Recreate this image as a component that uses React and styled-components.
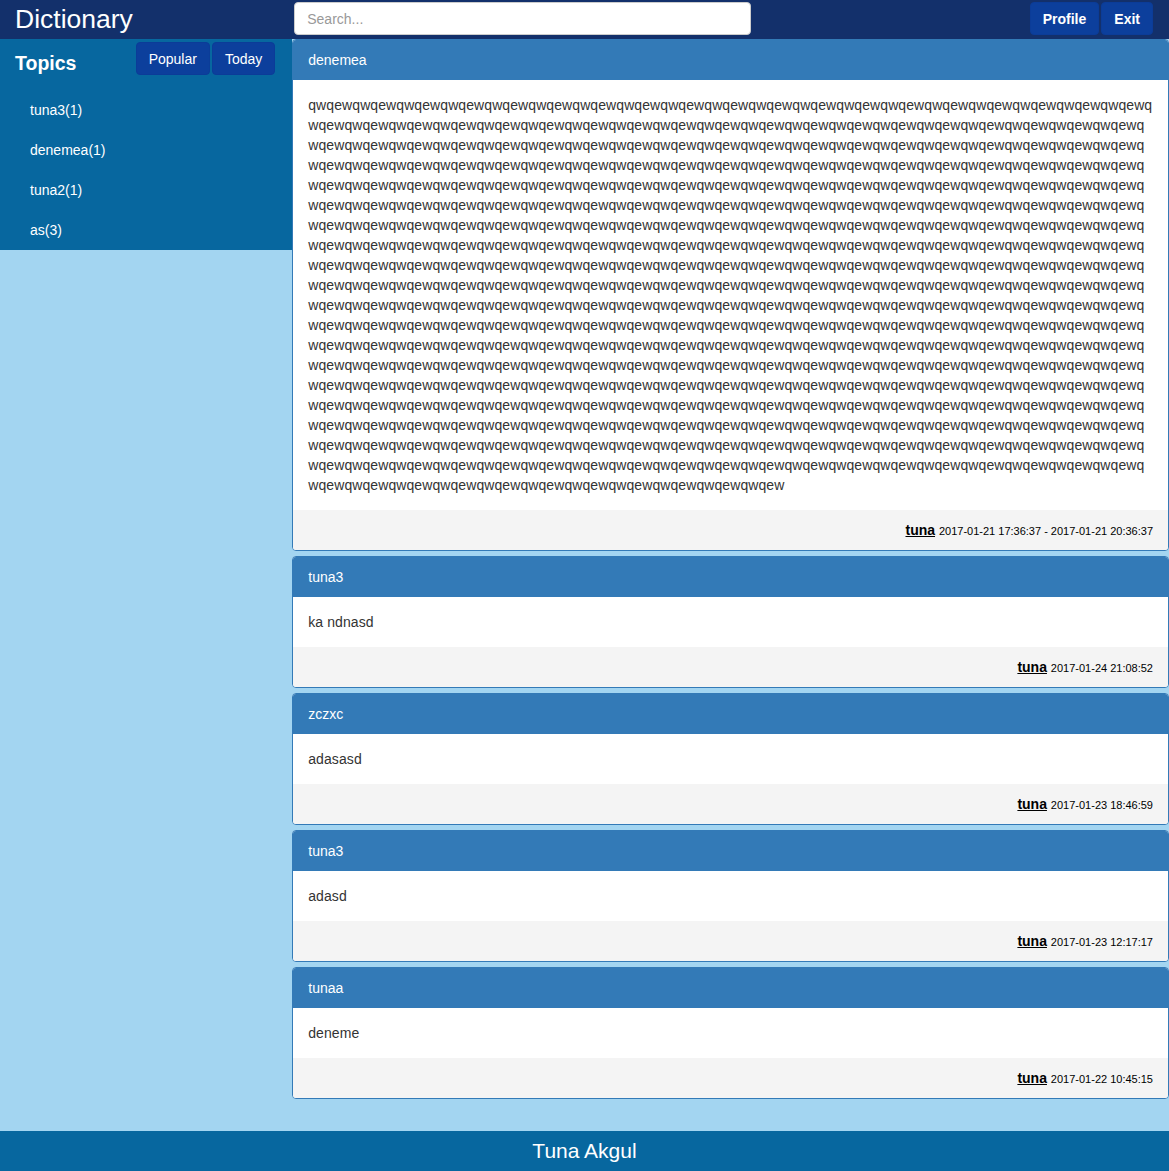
import React from "react";
import styled, { createGlobalStyle } from "styled-components";

const Global = createGlobalStyle`
  html, body { margin: 0; padding: 0; }
  body {
    background: #a3d5f1;
    font-family: "Liberation Sans", Arial, Helvetica, sans-serif;
    font-size: 14px;
    line-height: 20px;
    color: #333;
  }
  * { box-sizing: border-box; }
`;

const Page = styled.div`
  min-height: 100vh;
  display: flex;
  flex-direction: column;
`;

const Navbar = styled.header`
  height: 39px;
  background: #13306b;
  display: flex;
  align-items: flex-start;
`;

const Brand = styled.div`
  width: 25%;
  flex: none;
  padding-left: 15px;
  color: #fff;
  font-size: 26.5px;
  line-height: 39px;
`;

const Search = styled.input`
  margin: 2px 0 0 2px;
  width: 457px;
  height: 33px;
  border: 1px solid #ccc;
  border-radius: 4px;
  padding: 6px 12px;
  font-family: inherit;
  font-size: 14px;
  color: #555;
  outline: none;
  &::placeholder { color: #999; }
`;

const NavActions = styled.div`
  margin-left: auto;
  margin-top: 2px;
  padding-right: 16px;
  display: flex;
  gap: 2px;
`;

const Button = styled.button`
  height: 33px;
  padding: 6px 12px;
  border: 1px solid #0b3c98;
  border-radius: 4px;
  background: #0c3f9c;
  color: #fff;
  font-family: inherit;
  font-size: 14px;
  line-height: 20px;
  font-weight: ${(p) => (p.$bold ? 700 : 400)};
  cursor: pointer;
`;

const Content = styled.div`
  flex: 1;
  display: flex;
  align-items: flex-start;
`;

const Sidebar = styled.aside`
  width: 25%;
  flex: none;
  background: #07679f;
  color: #fff;
`;

const SideHeader = styled.div`
  display: flex;
  align-items: flex-start;
  justify-content: space-between;
  height: 51px;
  padding: 3px 17px 0 15px;
`;

const SideTitle = styled.h2`
  margin: 9px 0 0;
  font-size: 19.5px;
  line-height: 24px;
  font-weight: 700;
`;

const SideButtons = styled.div`
  display: flex;
  gap: 2px;
`;

const TopicList = styled.ul`
  list-style: none;
  margin: 0;
  padding: 0;
`;

const Topic = styled.li`
  padding: 10px 30px;
  line-height: 20px;
  color: #fff;
`;

const Main = styled.main`
  width: 75%;
  flex: none;
  padding-bottom: 27px;
`;

const Panel = styled.section`
  border: 1px solid #337ab7;
  border-radius: 4px;
  background: #fff;
  margin-bottom: 5px;
  overflow: hidden;
`;

const PanelHeading = styled.div`
  background: #337ab7;
  color: #fff;
  padding: 10px 15px;
  line-height: 20px;
`;

const PanelBody = styled.div`
  padding: 15px;
  line-height: 20px;
  color: #333;
  word-break: break-all;
  letter-spacing: 0.085px;
`;

const PanelFooter = styled.div`
  background: #f4f4f4;
  height: 40px;
  padding: 10px 15px;
  text-align: right;
  line-height: 20px;
  color: #000;
`;

const Author = styled.a`
  color: #000;
  font-weight: 700;
  text-decoration: underline;
  font-size: 14px;
  line-height: 20px;
`;

const DateText = styled.span`
  font-size: 11px;
  line-height: 1;
`;

const Footer = styled.footer`
  height: 40px;
  background: #07679f;
  color: #fff;
  text-align: center;
  font-size: 21px;
  line-height: 40px;
`;

const longText = "qwqew".repeat(372);

const topics = ["tuna3(1)", "denemea(1)", "tuna2(1)", "as(3)"];

const entries = [
  { title: "denemea", body: longText, date: "2017-01-21 17:36:37 - 2017-01-21 20:36:37" },
  { title: "tuna3", body: "ka ndnasd", date: "2017-01-24 21:08:52" },
  { title: "zczxc", body: "adasasd", date: "2017-01-23 18:46:59" },
  { title: "tuna3", body: "adasd", date: "2017-01-23 12:17:17" },
  { title: "tunaa", body: "deneme", date: "2017-01-22 10:45:15" },
];

export default function App() {
  return (
    <Page>
      <Global />
      <Navbar>
        <Brand>Dictionary</Brand>
        <Search placeholder="Search..." />
        <NavActions>
          <Button $bold>Profile</Button>
          <Button $bold>Exit</Button>
        </NavActions>
      </Navbar>
      <Content>
        <Sidebar>
          <SideHeader>
            <SideTitle>Topics</SideTitle>
            <SideButtons>
              <Button>Popular</Button>
              <Button>Today</Button>
            </SideButtons>
          </SideHeader>
          <TopicList>
            {topics.map((t) => (
              <Topic key={t}>{t}</Topic>
            ))}
          </TopicList>
        </Sidebar>
        <Main>
          {entries.map((e, i) => (
            <Panel key={i}>
              <PanelHeading>{e.title}</PanelHeading>
              <PanelBody>{e.body}</PanelBody>
              <PanelFooter>
                <Author>tuna</Author> <DateText>{e.date}</DateText>
              </PanelFooter>
            </Panel>
          ))}
        </Main>
      </Content>
      <Footer>Tuna Akgul</Footer>
    </Page>
  );
}
